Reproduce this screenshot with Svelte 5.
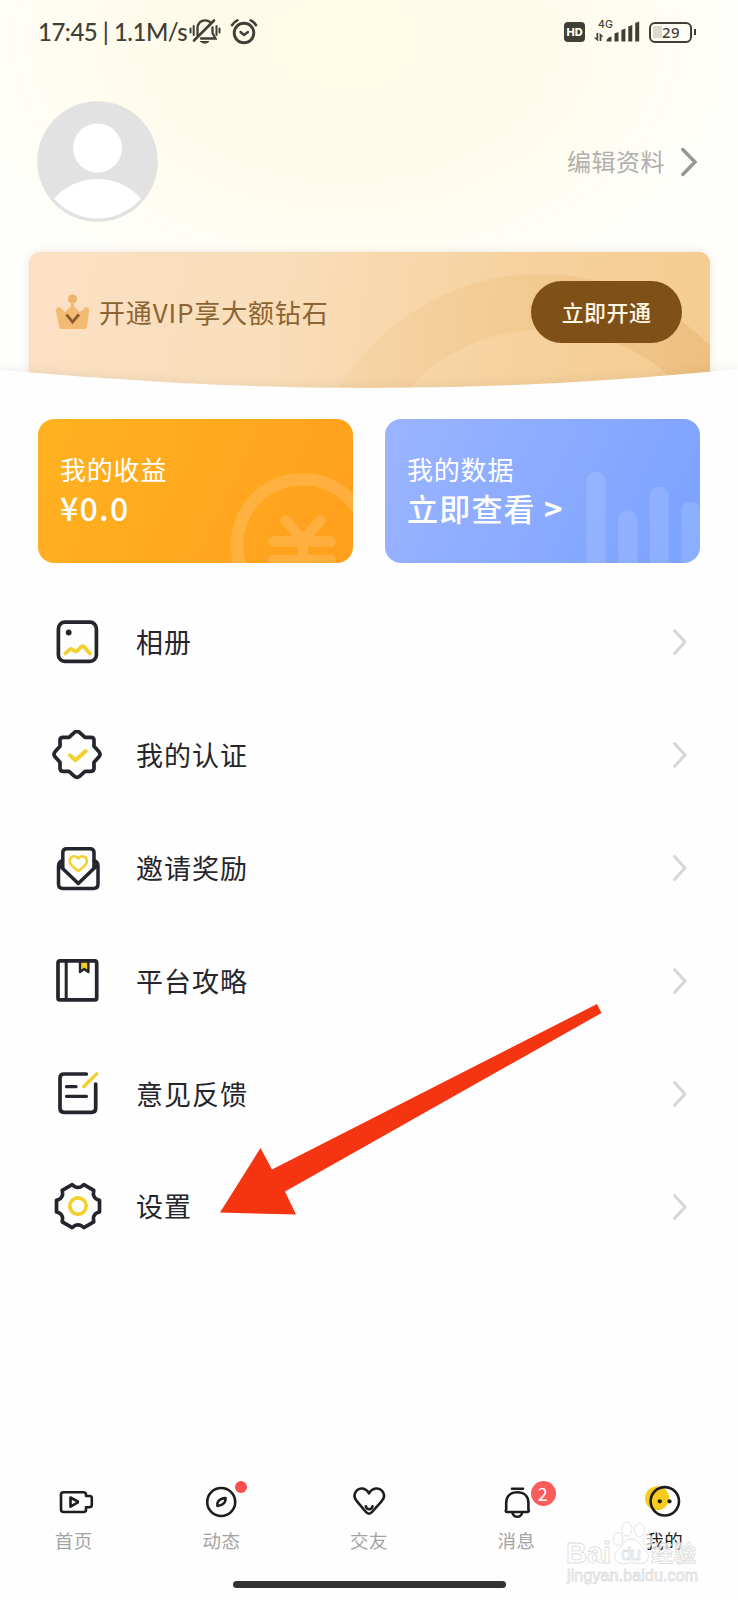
<script>
	const menu = [
		{ id: 'album', label: '相册' },
		{ id: 'verify', label: '我的认证' },
		{ id: 'invite', label: '邀请奖励' },
		{ id: 'guide', label: '平台攻略' },
		{ id: 'feedback', label: '意见反馈' },
		{ id: 'settings', label: '设置' }
	]

	const tabs = [
		{ id: 'home', label: '首页' },
		{ id: 'moments', label: '动态', dot: true },
		{ id: 'friends', label: '交友' },
		{ id: 'messages', label: '消息', count: 2 },
		{ id: 'me', label: '我的' }
	]

	let active = $state('me')

	const point = (deg, r) => {
		const a = (deg * Math.PI) / 180
		return `${(r * Math.cos(a)).toFixed(1)} ${(r * Math.sin(a)).toFixed(1)}`
	}

	// six wide teeth with a rounded notch between each pair
	const gear = [0, 60, 120, 180, 240, 300]
		.map((t, i) => `${i ? 'L' : 'M'}${point(t - 15, 22.3)} L${point(t + 15, 22.3)} L${point(t + 18, 20.8)} Q${point(t + 23, 18.7)} ${point(t + 30, 18.7)} Q${point(t + 37, 18.7)} ${point(t + 42, 20.8)}`)
		.join(' ') + 'Z'
</script>

<main>
	<header>
		<div class="status">
			<span class="clock">17:45 | 1.1M/s</span>
			<svg width="32" height="28" viewBox="0 0 32 28" fill="none" stroke="#403f37" stroke-width="2" stroke-linecap="round">
				<path d="M1.5 10.5v4M4.7 8v9M27.5 8v9M30.5 10.5v4" />
				<path d="M8.5 17V10.5C8.5 5 12 2.300 16 2.300c2.300 0 4 .7 5.300 2M23.500 9.500V15l3 5.500H12" stroke-width="2.300" />
				<path d="M25 2.500L5 22.500" stroke-width="2.600" />
				<path d="M11.500 23.500h8.500q-4.300 3.500-8.500 0z" fill="#403f37" stroke-width="1" />
			</svg>
			<svg class="alarm" width="28" height="28" viewBox="0 0 28 28" fill="none" stroke="#403f37" stroke-width="2.900" stroke-linecap="round">
				<circle cx="14" cy="15" r="9.800" />
				<path d="M10.500 14l3.500 3 4-3" stroke-width="2.400" />
				<path d="M2 7.200Q4 4 7.300 2.400M26 7.200Q24 4 20.700 2.400" stroke-width="2.600" />
			</svg>
			<span class="hd">HD</span>
			<span class="signal">
				<span class="net">4G</span>
				<svg width="48" height="24" viewBox="0 0 48 24" fill="#403f37">
					<path d="M0 17.500h2.500v-4.500h1.700v8.500zM5.600 13l4 3.700H7.400v4.300H5.600z" />
					<path d="M12.500 21.500q0-4 5-5v5z" />
					<path d="M20.500 13.500l4-1.500v9.500h-4zM27.400 10l4-1.500v13h-4zM34.300 6.500l4-1.500v16.500h-4zM41.200 3l4-1.500v20h-4z" />
				</svg>
			</span>
			<span class="battery"><span class="level">29</span></span>
		</div>

		<div class="profile">
			<svg width="121" height="121" viewBox="-60.500 -60.500 121 121">
				<circle r="60.300" fill="#e2e2e2" />
				<circle cy="-13.500" r="24.500" fill="#fff" />
				<path d="M-43.400 37A58 58 0 0 1 43.400 37A57 57 0 0 1 -43.400 37Z" fill="#fff" />
			</svg>
			<a class="edit" href="#edit">
				<span>编辑资料</span>
				<svg width="20" height="32" viewBox="0 0 20 32" fill="none" stroke="#969696" stroke-width="3.400" stroke-linecap="round">
					<path d="M2.800 3.500L15 16 2.800 28.500" />
				</svg>
			</a>
		</div>

		<div class="vip">
			<svg class="rings" width="681" height="150" viewBox="0 0 681 150">
				<defs>
					<linearGradient id="ring" gradientUnits="userSpaceOnUse" x1="300" y1="0" x2="681" y2="0">
						<stop offset="0" stop-color="#efbd7c" stop-opacity=".14" />
						<stop offset="1" stop-color="#e3b069" stop-opacity=".42" />
					</linearGradient>
				</defs>
				<path fill="url(#ring)" fill-rule="evenodd" d="M276.500 257a235 235 0 1 1 470 0a235 235 0 1 1 -470 0ZM329.500 264a187 187 0 1 0 374 0a187 187 0 1 0 -374 0Z" />
			</svg>
			<svg class="crown" width="36" height="36" viewBox="0 0 36 36">
				<circle cx="17.500" cy="5" r="4.600" fill="#efb46c" />
				<path d="M16 8h3v4l5.500 6 4-2.500C29.500 11.500 35 13 34 17l-2 15.500Q31.700 35 29 35H7Q4.500 35 4 32.500L1 17C.5 13 5.500 11.500 7 15.500l3.500 2.500L16 12z" fill="#f2ba72" />
				<path d="M11.500 20.500l6 7.500 6.500-7.500" fill="none" stroke="#8a5a2b" stroke-width="2.800" />
			</svg>
			<span class="vip-text">开通VIP享大额钻石</span>
			<button class="open"><span>立即开通</span></button>
		</div>
		<svg class="curve" width="738" height="30" viewBox="0 0 738 30">
			<path d="M0 4Q90 12 180 17Q275 22 369 22Q463 22 558 17Q648 12 738 3V30H0Z" fill="#fefefe" />
		</svg>
	</header>

	<section class="cards">
		<div class="card income">
			<svg class="art" width="315" height="144" viewBox="0 0 315 144" fill="none" stroke="#fff" stroke-linecap="round" opacity=".15">
				<circle cx="264.700" cy="126" r="65.700" stroke-width="12.600" />
				<path d="M247.500 101.500L265 121 282.500 101.500M235.500 122.500h57M235.500 141h57M265 121v30" stroke-width="10.500" />
			</svg>
			<span class="title">我的收益</span>
			<strong class="amount">¥0.0</strong>
		</div>
		<div class="card data">
			<svg class="art" width="315" height="144" viewBox="0 0 315 144" fill="#fff" opacity=".12">
				<rect x="201.500" y="53" width="19" height="120" rx="9.500" />
				<rect x="233.200" y="91" width="19" height="120" rx="9.500" />
				<rect x="264.800" y="67.500" width="19" height="120" rx="9.500" />
				<rect x="296.300" y="82.500" width="19" height="120" rx="9.500" />
			</svg>
			<span class="title">我的数据</span>
			<strong>立即查看 <i>&gt;</i></strong>
		</div>
	</section>

	<ul class="menu">
		{#each menu as item}
			<li>
				<svg width="52" height="50" viewBox="0 0 52 50" fill="none" stroke="#25252d" stroke-width="3.700" stroke-linecap="round" stroke-linejoin="round">
					{#if item.id === 'album'}
						<rect x="6.400" y="5.200" width="38" height="39.200" rx="6.500" />
						<circle cx="16.700" cy="15.500" r="2.900" fill="#25252d" stroke="none" />
						<path class="accent" d="M13.300 36.500l3.600-3.500q2.300-2.200 4.300 0q2.500 2.700 5 0l2.800-3q1.700-1.500 3.300 0l5.500 6.500" stroke-width="3.800" />
					{:else if item.id === 'verify'}
						<path transform="translate(25 24.300)" d="M-8-17L-2.500-22Q0-24 2.500-22L8-17H14Q17-17 17-14V-8L22-2.500Q24 0 22 2.500L17 8V14Q17 17 14 17H8L2.500 22Q0 24-2.500 22L-8 17H-14Q-17 17-17 14V8L-22 2.500Q-24 0-22-2.500L-17-8V-14Q-17-17-14-17Z" />
						<path class="accent" d="M18 25.300l5.500 5L33.700 21" stroke-width="4" />
					{:else if item.id === 'invite'}
						<path d="M10.500 17.500Q6.500 19 6.500 23V41Q6.500 45.500 11 45.500H41.500Q46 45.500 46 41V23Q46 19 42 17.500" stroke-width="3.500" />
						<path d="M10.800 25V9.500Q10.800 5.700 14.800 5.700H38Q42 5.700 42 9.500V25" stroke-width="3.500" />
						<path d="M7.500 22.500L26.300 40.500 45 22.500" stroke-width="3.500" />
						<path class="accent" d="M26.300 15.500C24 12 17.700 12.500 17.700 18.500C17.700 22 22 25 26.300 28C30.500 25 34.900 22 34.900 18.500C34.900 12.500 28.500 12 26.300 15.500Z" stroke-width="2.500" />
					{:else if item.id === 'guide'}
						<rect x="6" y="4.900" width="38.700" height="39" rx="2" />
						<path d="M14.200 5v38" stroke-width="3" />
						<path d="M28 5.500V16l4.200-3 4.200 3V5.500z" fill="#f3cf2b" stroke-width="2.400" />
					{:else if item.id === 'feedback'}
						<path d="M34.300 5H12Q8 5 8 9V39.300Q8 43.300 12 43.300H39.700Q43.700 43.300 43.700 39.300V15" />
						<path d="M14.500 17.700h9.500M14.500 27.300h20" stroke-width="3.200" />
						<path class="accent" d="M31.800 17.500L44.800 4.800" stroke-width="3.300" />
					{:else}
						<path transform="translate(26 24.100)" d={gear} />
						<circle class="accent" cx="26" cy="24.100" r="8.200" stroke-width="3.700" />
					{/if}
				</svg>
				<span>{item.label}</span>
				<svg class="go" width="18" height="30" viewBox="0 0 18 30" fill="none" stroke="#d6d6d6" stroke-width="3" stroke-linecap="round">
					<path d="M3.500 3.500L14 15 3.500 26.500" />
				</svg>
			</li>
		{/each}
	</ul>

	<nav>
		{#each tabs as tab}
			<button class="tab" class:active={active === tab.id} onclick={() => (active = tab.id)}>
				<span class="glyph">
					<svg width="48" height="48" viewBox="0 0 48 48" fill="none" stroke="#1d1d1f" stroke-width="2.600" stroke-linecap="round" stroke-linejoin="round">
						{#if tab.id === 'home'}
							<path d="M36 18V16.500Q36 14.200 33.500 14.200H13.500Q11 14.200 11 16.500V31.500Q11 34 13.500 34H33.500Q36 34 36 31.500V29.300L39 29.300Q41.800 29.300 41.800 27V20.300Q41.800 18 40 18Z" />
							<path d="M20.500 19.500V28.700L27.500 24.700Q28.300 24 27.500 23.300Z" />
						{:else if tab.id === 'moments'}
							<circle cx="24.200" cy="24" r="14" />
							<path d="M28.500 20C29 24 27 27 20.500 28C19.700 24 22 20.500 28.500 20Z" />
						{:else if tab.id === 'friends'}
							<path d="M24 15.500C20.500 9 14 9.700 11.500 12.800C8.500 16.500 9.300 20.500 12 23.300L20.500 33.500Q24 38 27.500 33.500L36.500 23.300C39.300 20.500 40 16.500 37 12.800C34.500 9.700 27.500 9 24 15.500Z" />
							<path d="M20.800 28.300q.7 3 3.400 3t3.300-3" />
						{:else if tab.id === 'messages'}
							<path d="M19 10.800h11" />
							<path d="M13.200 31.500V25C13.200 18 18 14.300 24.300 14.300S35.400 18 35.400 25V31.500Q36.500 34 34.500 34H14Q12 34 13.200 31.500Z" />
							<path d="M19.500 35q1 3.800 4.800 3.800t4.800-3.800" />
						{:else}
							<circle cx="17.100" cy="20.300" r="12" fill="#f8cc1c" stroke="none" />
							<circle cx="24.800" cy="23.300" r="14.200" />
							<g fill="#1d1d1f" stroke="none">
								<circle cx="19.800" cy="23.300" r="2.100" />
								<circle cx="29.500" cy="23.300" r="2.100" />
							</g>
						{/if}
					</svg>
					{#if tab.dot}<span class="dot"></span>{/if}
					{#if tab.count}<span class="count">{tab.count}</span>{/if}
				</span>
				{tab.label}
			</button>
		{/each}
	</nav>
	<div class="home-bar"></div>

	<svg class="pointer" width="382" height="212" viewBox="0 0 382 212">
		<path d="M0 208.500L40.500 144 52 165.500 377 0 381.500 9 65 187.500 76 210.500Z" fill="#f53412" />
	</svg>

	<svg class="watermark" width="142" height="70" viewBox="0 0 142 70" fill="#fff" fill-opacity=".7" stroke="#dfdfdf" stroke-width=".9">
		<text x="3" y="43.500" font-size="29" font-weight="700" textLength="45">Bai</text>
		<ellipse cx="55" cy="20" rx="4.800" ry="6.500" />
		<ellipse cx="64" cy="10" rx="5" ry="7" />
		<ellipse cx="76.500" cy="11" rx="5" ry="7" />
		<ellipse cx="85" cy="22" rx="4.500" ry="6.500" />
		<path d="M68 20C76 20 77 27 82 31C88 35 86 45 77 44.500Q68 42.500 61 44.500C52 45 49 37 55 31C61 26 61 20 68 20Z" />
		<text x="58" y="41" font-size="19" font-weight="400" textLength="20">du</text>
		<text class="cn" x="88" y="42" font-size="22" font-weight="700" textLength="45">经验</text>
		<text x="4" y="61.500" font-size="16" textLength="131">jingyan.baidu.com</text>
	</svg>
</main>

<style>
	:global(body) {
		margin: 0;
		background: #fefefe;
	}

	main {
		position: relative;
		display: flex;
		flex-direction: column;
		width: 738px;
		height: 1600px;
		overflow: hidden;
		font-family: 'Noto Sans CJK SC', sans-serif;
		color: #25252b;
	}

	header {
		position: relative;
		box-sizing: border-box;
		height: 396px;
		overflow: hidden;
		background: radial-gradient(ellipse 430px 290px at 345px 40px, #fffbe7 0%, #fffbe9 40%, #fffdf5 75%, #fefefc 100%);
	}

	.status {
		display: flex;
		align-items: center;
		height: 64px;
		padding: 0 46px 0 38px;
		color: #403f37;
	}

	.clock {
		width: 151px;
		font: 500 24px/30px Lato, sans-serif;
		letter-spacing: -.5px;
		white-space: nowrap;
	}

	.alarm {
		margin-left: 9px;
	}

	.hd {
		width: 21px;
		height: 20px;
		margin-left: auto;
		border-radius: 4px;
		background: #403f37;
		color: #fffdf0;
		font: 800 11px/20px Inter, sans-serif;
		text-align: center;
	}

	.signal {
		position: relative;
		height: 24px;
		margin-left: 9px;
	}

	.net {
		position: absolute;
		top: 0;
		left: 4px;
		font: 500 10.500px/10px Inter, sans-serif;
	}

	.battery {
		position: relative;
		box-sizing: border-box;
		width: 43px;
		height: 21px;
		margin-left: 7px;
		border: 2.500px solid #403f37;
		border-radius: 6px;
	}

	.battery::after {
		content: '';
		position: absolute;
		top: 5px;
		right: -6px;
		width: 2.500px;
		height: 6px;
		background: #403f37;
	}

	.level {
		display: block;
		margin: 2px;
		border-left: 9px solid #dcdad0;
		font: 500 15px/12px 'Noto Sans', sans-serif;
		letter-spacing: .5px;
	}

	.profile {
		display: flex;
		align-items: center;
		justify-content: space-between;
		height: 121px;
		padding: 37px 38px 30px 37px;
	}

	.edit {
		display: flex;
		align-items: center;
		gap: 15px;
		color: #b0b0ae;
		font-size: 24px;
		letter-spacing: .5px;
		text-decoration: none;
	}

	.edit span {
		padding-bottom: 3px;
	}

	.vip {
		position: relative;
		display: flex;
		align-items: center;
		box-sizing: border-box;
		height: 160px;
		margin: 0 28px 0 29px;
		padding: 0 28px 40px 26px;
		border-radius: 11px;
		background: linear-gradient(100deg, #fbe0c4 0%, #f9deba 35%, #f6d2a0 68%, #f5cb90 100%);
		box-shadow: 0 0 9px rgba(150, 120, 80, .16);
		overflow: hidden;
	}

	.rings {
		position: absolute;
		top: 0;
		left: 0;
	}

	.crown {
		position: relative;
	}

	.vip-text {
		margin-left: 8px;
		padding-bottom: 2px;
		color: #8c6433;
		font-size: 26px;
		letter-spacing: .85px;
	}

	.open {
		position: relative;
		width: 151px;
		height: 62px;
		margin-left: auto;
		border: 0;
		border-radius: 31px;
		background: #7f5118;
		color: #fff6e4;
		font: 500 22px 'Noto Sans CJK SC', sans-serif;
		letter-spacing: .4px;
	}

	.open span {
		display: block;
		padding-bottom: 3px;
	}

	.curve {
		position: absolute;
		left: 0;
		bottom: 0;
		filter: drop-shadow(0 -3px 4px rgba(90, 80, 60, .07));
	}

	.cards {
		display: flex;
		gap: 32px;
		padding: 23px 38px;
	}

	.card {
		position: relative;
		display: flex;
		flex-direction: column;
		box-sizing: border-box;
		width: 315px;
		height: 144px;
		padding: 31px 22px;
		border-radius: 16px;
		overflow: hidden;
		color: #fff;
	}

	.income {
		background: linear-gradient(115deg, #ffb220, #ff9f1d);
	}

	.data {
		background: linear-gradient(115deg, #9bb4ff, #7aa2ff);
	}

	.art {
		position: absolute;
		top: 0;
		left: 0;
	}

	.title {
		font-size: 26px;
		line-height: 38px;
		letter-spacing: .8px;
	}

	strong {
		font-size: 31px;
		font-weight: 500;
		line-height: 40px;
		letter-spacing: 1.200px;
		white-space: nowrap;
	}

	.amount {
		font-size: 32px;
		line-height: 39px;
		letter-spacing: 1.300px;
	}

	strong i {
		font-style: normal;
		font-weight: 700;
	}

	.menu {
		margin: 0;
		padding: 0 49px 0 52px;
		list-style: none;
	}

	.menu li {
		display: flex;
		align-items: center;
		height: 112.900px;
		font-size: 27px;
		letter-spacing: 1px;
	}

	.menu span {
		margin-left: 32px;
		padding-bottom: 2px;
	}

	.go {
		margin-left: auto;
	}

	.accent {
		stroke: #f3d02e;
	}

	nav {
		display: flex;
		height: 86px;
		margin-top: auto;
		box-shadow: 0 0 12px rgba(0, 0, 0, .02);
	}

	.tab {
		display: flex;
		flex: 1;
		flex-direction: column;
		align-items: center;
		padding: 3px 0 0;
		border: 0;
		background: none;
		color: #a3a3a3;
		font: 18.500px/28px 'Noto Sans CJK SC', sans-serif;
		letter-spacing: .5px;
	}

	.active {
		color: #222;
	}

	.glyph {
		position: relative;
		height: 48px;
	}

	.dot {
		position: absolute;
		top: 3px;
		left: 37.500px;
		width: 12px;
		height: 12px;
		border-radius: 50%;
		background: #fb4f4f;
	}

	.count {
		position: absolute;
		top: 3px;
		left: 38px;
		width: 25px;
		height: 25px;
		border-radius: 50%;
		background: #fa5c5c;
		color: #fff;
		font-size: 18px;
		line-height: 24px;
		text-align: center;
	}

	.home-bar {
		width: 273px;
		height: 7px;
		margin: 20px auto 12px;
		border-radius: 4px;
		background: #333;
	}

	.pointer {
		position: absolute;
		top: 1004px;
		left: 220px;
	}

	.watermark {
		position: absolute;
		top: 1519px;
		left: 563px;
		font-family: 'Liberation Sans', sans-serif;
		pointer-events: none;
	}

	.cn {
		font-family: 'Noto Sans CJK SC', sans-serif;
	}
</style>
